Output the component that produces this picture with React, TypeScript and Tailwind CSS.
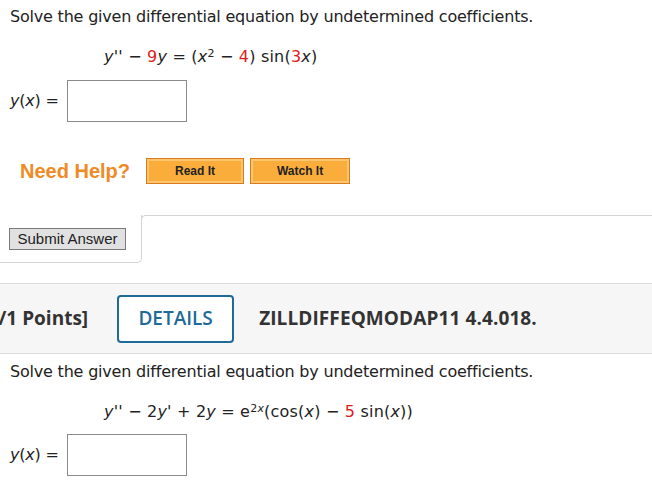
import React from 'react';

const q = { fontFamily: '"DejaVu Sans", Verdana, sans-serif' };
const arial = { fontFamily: '"Liberation Sans", Arial, sans-serif' };
const open = { fontFamily: '"Open Sans", "Liberation Sans", sans-serif' };

const Red: React.FC<{ children: React.ReactNode }> = ({ children }) => (
  <span className="text-[#e01b1b]">{children}</span>
);

const Answer: React.FC = () => (
  <div className="flex items-center pl-[10px]">
    <span className="w-[57px]">
      <i>y</i>(<i>x</i>) =
    </span>
    <div className="w-[120px] h-[42px] border border-[#8a8a8a] bg-white" />
  </div>
);

export default function App() {
  return (
    <div className="w-[652px] h-[504px] overflow-hidden bg-white text-[#222] text-[16px] tracking-[-0.2px]" style={q}>
      {/* Question 1 */}
      <p className="pl-[10px] pt-[7px] leading-[20px]">Solve the given differential equation by undetermined coefficients.</p>
      <p className="pl-[104px] pt-[20px] leading-[20px] tracking-[0.2px]">
        <i>y</i>'' − <Red>9</Red><i>y</i> = (<i>x</i><sup className="text-[11px]">2</sup> − <Red>4</Red>) sin(<Red>3</Red><i>x</i>)
      </p>
      <div className="mt-[13px]">
        <Answer />
      </div>

      {/* Help */}
      <div className="flex items-center mt-[34px] pl-[20px]" style={arial}>
        <span className="text-[20px] font-bold text-[#f08a24] tracking-normal mr-[16px]">Need Help?</span>
        <button className="w-[98px] h-[26px] bg-[#fbad3c] border border-[#dd7a19] shadow-[inset_0_0_0_2px_#fdc56e] text-[12px] font-bold text-[#222] tracking-normal mr-[6px]">Read It</button>
        <button className="w-[100px] h-[26px] bg-[#fbad3c] border border-[#dd7a19] shadow-[inset_0_0_0_2px_#fdc56e] text-[12px] font-bold text-[#222] tracking-normal">Watch It</button>
      </div>

      {/* Submit */}
      <div className="flex mt-[29px]">
        <div className="w-[142px] h-[48px] border-r border-b border-[#d4d4d4] rounded-br-[5px] flex items-center pl-[9px]">
          <button className="w-[117px] h-[22px] bg-[#e1e1e1] border border-[#7a7a7a] text-[15px] text-[#222] tracking-normal leading-none" style={arial}>Submit Answer</button>
        </div>
        <div className="flex-1 h-[10px] ml-[-1px] border-t border-l border-[#d4d4d4] rounded-tl-[5px]" />
      </div>

      {/* Points band */}
      <div className="mt-[20px] h-[71px] bg-[#f6f6f6] border-y border-[#dcdcdc] flex items-center tracking-normal" style={open}>
        <span className="ml-[-11px] text-[19px] font-bold text-[#333]">–/1 Points]</span>
        <span className="ml-[29px] w-[117px] h-[48px] border-2 border-[#1e6b99] rounded-[4px] flex items-center justify-center text-[19px] font-semibold text-[#1e6b99] bg-white">DETAILS</span>
        <span className="ml-[25px] text-[19px] font-bold text-[#333] tracking-[0.1px]">ZILLDIFFEQMODAP11 4.4.018.</span>
      </div>

      {/* Question 2 */}
      <p className="pl-[10px] pt-[8px] leading-[20px]">Solve the given differential equation by undetermined coefficients.</p>
      <p className="pl-[104px] pt-[20px] leading-[20px] tracking-[0.2px]">
        <i>y</i>'' − 2<i>y</i>' + 2<i>y</i> = e<sup className="text-[11px]">2<i>x</i></sup>(cos(<i>x</i>) − <Red>5</Red> sin(<i>x</i>))
      </p>
      <div className="mt-[12px]">
        <Answer />
      </div>
    </div>
  );
}
